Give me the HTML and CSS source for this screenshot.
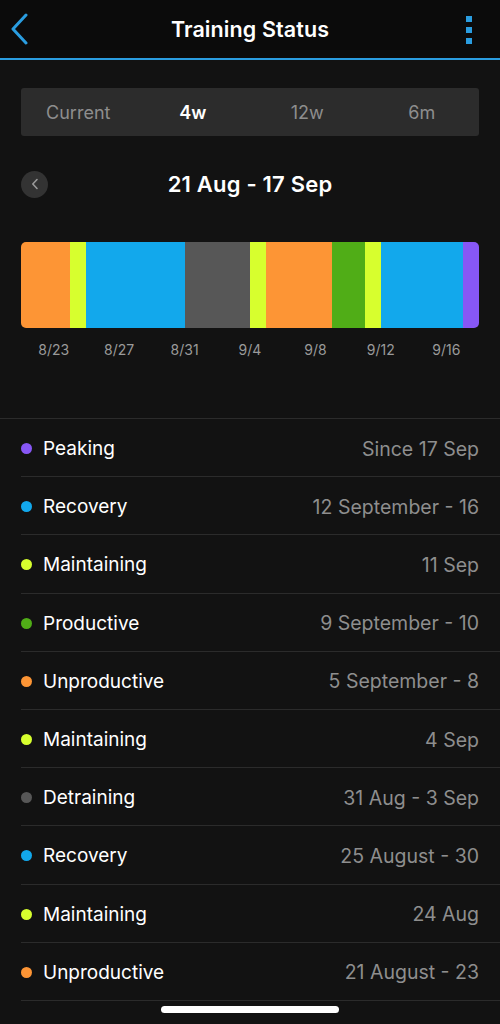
FILE: index.html
```html
<!DOCTYPE html>
<html lang="en">
<head>
    <meta charset="UTF-8">
    <meta name="viewport" content="width=device-width, initial-scale=1.0">
    <title>Training Status</title>
    <link rel="stylesheet" href="styles.css">
</head>
<body>

    <!-- Top bar -->
    <header class="topbar">
        <svg class="back" width="20" height="32" viewBox="0 0 20 32">
            <path d="M16 2 L3 16 L16 30" fill="none" stroke="#2a9de0" stroke-width="3" stroke-linecap="round" stroke-linejoin="round"/>
        </svg>
        <h1>Training Status</h1>
        <div class="kebab">
            <span></span><span></span><span></span>
        </div>
    </header>

    <main class="content">
        <!-- Period selector -->
        <div class="tabs">
            <div class="tab">Current</div>
            <div class="tab active">4w</div>
            <div class="tab">12w</div>
            <div class="tab">6m</div>
        </div>

        <div class="range">
            <div class="prev">
                <svg width="8" height="12" viewBox="0 0 8 12">
                    <path d="M6 1.5 L1.8 6 L6 10.5" fill="none" stroke="#9a9a9a" stroke-width="1.6" stroke-linecap="round" stroke-linejoin="round"/>
                </svg>
            </div>
            <h2>21 Aug - 17 Sep</h2>
        </div>

        <!-- Status bar, one block per status period (grow = days) -->
        <div class="timeline">
            <div class="seg unproductive" style="flex-grow: 3"></div>
            <div class="seg maintaining" style="flex-grow: 1"></div>
            <div class="seg recovery" style="flex-grow: 6"></div>
            <div class="seg detraining" style="flex-grow: 4"></div>
            <div class="seg maintaining" style="flex-grow: 1"></div>
            <div class="seg unproductive" style="flex-grow: 4"></div>
            <div class="seg productive" style="flex-grow: 2"></div>
            <div class="seg maintaining" style="flex-grow: 1"></div>
            <div class="seg recovery" style="flex-grow: 5"></div>
            <div class="seg peaking" style="flex-grow: 1"></div>
        </div>
        <div class="ticks">
            <span>8/23</span>
            <span>8/27</span>
            <span>8/31</span>
            <span>9/4</span>
            <span>9/8</span>
            <span>9/12</span>
            <span>9/16</span>
        </div>
    </main>

    <!-- History list -->
    <ul class="history">
        <li><i class="dot peaking"></i><span class="name">Peaking</span><span class="when">Since 17 Sep</span></li>
        <li><i class="dot recovery"></i><span class="name">Recovery</span><span class="when">12 September - 16</span></li>
        <li><i class="dot maintaining"></i><span class="name">Maintaining</span><span class="when">11 Sep</span></li>
        <li><i class="dot productive"></i><span class="name">Productive</span><span class="when">9 September - 10</span></li>
        <li><i class="dot unproductive"></i><span class="name">Unproductive</span><span class="when">5 September - 8</span></li>
        <li><i class="dot maintaining"></i><span class="name">Maintaining</span><span class="when">4 Sep</span></li>
        <li><i class="dot detraining"></i><span class="name">Detraining</span><span class="when">31 Aug - 3 Sep</span></li>
        <li><i class="dot recovery"></i><span class="name">Recovery</span><span class="when">25 August - 30</span></li>
        <li><i class="dot maintaining"></i><span class="name">Maintaining</span><span class="when">24 Aug</span></li>
        <li><i class="dot unproductive"></i><span class="name">Unproductive</span><span class="when">21 August - 23</span></li>
    </ul>

    <div class="home-bar"></div>

</body>
</html>
```

FILE: styles.css
```css
* {
    box-sizing: border-box;
}
body {
    margin: 0;
    height: 1024px;
    overflow: hidden;
    background: #121212;
    color: #fff;
    font-family: "Inter", "Liberation Sans", sans-serif;
    position: relative;
}

/* top bar */
.topbar {
    height: 60px;
    background: #0b0b0b;
    border-bottom: 2px solid #2a9de0;
    display: flex;
    align-items: center;
    justify-content: space-between;
    padding: 0 28px 0 10px;
}
.topbar h1 {
    margin: 0 0 0 4px;
    font-size: 21.5px;
    font-weight: 600;
    letter-spacing: 0.1px;
}
.back {
    display: block;
}
.kebab {
    display: flex;
    flex-direction: column;
    gap: 5px;
    padding-top: 1px;
}
.kebab span {
    width: 6px;
    height: 6px;
    background: #2a9de0;
}

.content {
    padding: 28px 21px 0;
}

/* period tabs */
.tabs {
    display: grid;
    grid-template-columns: repeat(4, 1fr);
    height: 48px;
    background: #2c2c2c;
    border-radius: 3px;
    align-items: center;
}
.tab {
    text-align: center;
    font-size: 18px;
    color: #8e8e8e;
    padding-top: 1px;
}
.tab.active {
    color: #fff;
    font-weight: 600;
}

/* date range */
.range {
    display: flex;
    align-items: center;
    height: 26px;
    margin-top: 35px;
}
.prev {
    width: 27px;
    height: 27px;
    border-radius: 50%;
    background: #333;
    display: flex;
    align-items: center;
    justify-content: center;
}
.range h2 {
    flex: 1;
    margin: 0 27px 0 0;
    text-align: center;
    font-size: 22px;
    font-weight: 600;
    letter-spacing: 0.2px;
}

/* timeline */
.timeline {
    display: flex;
    height: 86px;
    margin-top: 45px;
    border-radius: 5px;
    overflow: hidden;
}
.seg {
    flex-basis: 0;
}
.ticks {
    display: grid;
    grid-template-columns: repeat(7, 1fr);
    margin-top: 13px;
}
.ticks span {
    text-align: center;
    font-size: 14px;
    color: #9a9a9a;
}

.unproductive { background: #fd9535; }
.maintaining { background: #d7ff2e; }
.recovery { background: #12a8ec; }
.detraining { background: #575757; }
.productive { background: #50ad17; }
.peaking { background: #8757f5; }

/* history list */
.history {
    list-style: none;
    margin: 60px 0 0;
    padding: 0;
    border-top: 1px solid #2b2b2b;
}
.history li {
    height: 58.2px;
    margin-left: 21px;
    padding-right: 21px;
    padding-top: 2px;
    display: flex;
    align-items: center;
    border-bottom: 1px solid #2b2b2b;
}
.dot {
    width: 11px;
    height: 11px;
    border-radius: 50%;
    margin-right: 11px;
}
.name {
    flex: 1;
    font-size: 19px;
    color: #fff;
}
.when {
    font-size: 19.5px;
    color: #8e8e8e;
}

.home-bar {
    position: absolute;
    left: 161px;
    top: 1006px;
    width: 178px;
    height: 7px;
    border-radius: 4px;
    background: #fff;
}
```
